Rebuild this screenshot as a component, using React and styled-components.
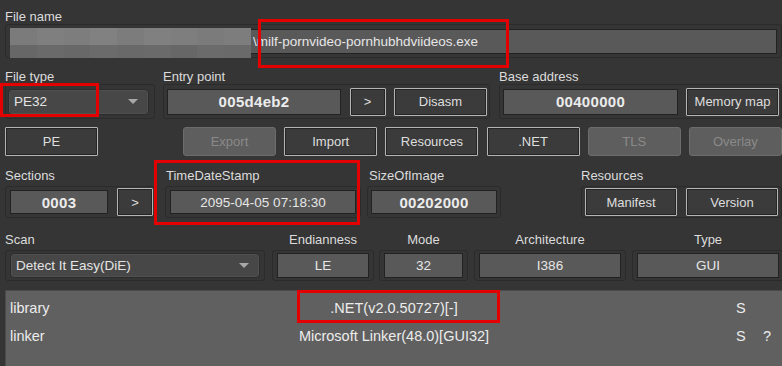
import React from "react";
import styled, { createGlobalStyle, css } from "styled-components";

const GlobalStyle = createGlobalStyle`
  html, body { margin: 0; padding: 0; background: #353535; }
  body { font-family: "Liberation Sans", Arial, sans-serif; }
  * { box-sizing: border-box; }
`;

const Page = styled.div`
  position: relative;
  width: 782px;
  height: 366px;
  overflow: hidden;
  background: #353535;
  padding-top: 9px;
  display: flex;
  flex-direction: column;
  color: #dcdcdc;
`;

const Row = styled.div`
  display: flex;
  align-items: flex-start;
  margin-top: ${(p) => p.$mt || 0}px;
`;

const Group = styled.div`
  display: flex;
  flex-direction: column;
  flex: none;
  width: ${(p) => p.$w}px;
  margin-left: ${(p) => p.$ml}px;
`;

const Label = styled.div`
  font-size: 13px;
  line-height: 15px;
  color: #dcdcdc;
  white-space: nowrap;
  padding-left: ${(p) => p.$pl || 0}px;
  text-align: ${(p) => (p.$center ? "center" : "left")};
  margin-bottom: ${(p) => p.$mb || 0}px;
`;

const Frame = styled.div`
  position: relative;
  display: flex;
  align-items: center;
  gap: ${(p) => p.$gap || 0}px;
  height: ${(p) => p.$h}px;
  padding: 0 ${(p) => p.$pad}px;
  border: 1px solid #2b2b2b;
  border-radius: 3px;
`;

const Field = styled.div`
  flex: none;
  width: ${(p) => (p.$w ? `${p.$w}px` : "auto")};
  ${(p) => !p.$w && "flex: 1;"}
  height: ${(p) => p.$h}px;
  background: #595959;
  border: 1px solid #222;
  display: flex;
  align-items: center;
  justify-content: ${(p) => (p.$left ? "flex-start" : "center")};
  padding-left: ${(p) => p.$pl || 0}px;
  white-space: nowrap;
  overflow: hidden;
  color: #e6e6e6;
  ${(p) =>
    p.$bold
      ? css`
          font-weight: bold;
          font-size: 15px;
          letter-spacing: 0.3px;
          color: #ececec;
        `
      : css`
          font-size: 13.5px;
        `}
`;

const Button = styled.div`
  flex: none;
  width: ${(p) => p.$w}px;
  height: ${(p) => p.$h || 28}px;
  display: flex;
  align-items: center;
  justify-content: center;
  font-size: 13px;
  white-space: nowrap;
  ${(p) =>
    p.$disabled
      ? css`
          background: #5e5e5e;
          border: 1px solid #6c6c6c;
          border-radius: 3px;
          color: #8a8a8a;
        `
      : css`
          background: #3b3b3b;
          border: 1px solid #b4b4b4;
          border-radius: 1px;
          box-shadow: inset 0 0 0 1px #252525;
          color: #dedede;
        `}
`;

const ButtonRow = styled.div`
  display: flex;
  align-items: center;
  gap: 8.2px;
  margin-top: 8px;
  padding-left: 5px;
`;

const Spacer = styled.div`
  flex: none;
  width: ${(p) => p.$w}px;
`;

const Combo = styled.div`
  flex: none;
  width: ${(p) => p.$w}px;
  height: ${(p) => p.$h}px;
  background: #474747;
  border: 1px solid #2c2c2c;
  box-shadow: inset 0 0 0 1px #505050;
  border-radius: 4px;
  display: flex;
  align-items: center;
  justify-content: space-between;
  padding: 0 10px 0 5px;
  font-size: 13.5px;
  color: #e4e4e4;
  white-space: nowrap;
`;

const Arrow = styled.span`
  width: 0;
  height: 0;
  border-left: 5px solid transparent;
  border-right: 5px solid transparent;
  border-top: 5px solid #a8a8a8;
`;

const Mosaic = styled.div`
  position: absolute;
  left: 4px;
  top: 3px;
  width: 241px;
  height: 30px;
  display: grid;
  grid-template-rows: 17px 13px;
  grid-template-columns: repeat(9, 1fr);
`;

const Tile = styled.div`
  background: ${(p) => p.$c};
`;

const Results = styled.div`
  margin: 9px 0 0 5px;
  flex: 1;
  background: #606060;
  border-top: 1px solid #4a4a4a;
  border-left: 1px solid #4a4a4a;
  padding: 3px 0 0 4px;
  display: grid;
  grid-template-columns: 187px 394px 145px 27px 1fr;
  grid-auto-rows: 28px;
  align-content: start;
  font-size: 14.5px;
  color: #ececec;
`;

const Cell = styled.div`
  line-height: 28px;
  white-space: nowrap;
  text-align: ${(p) => (p.$center ? "center" : "left")};
`;

const RedBox = styled.div`
  position: absolute;
  left: ${(p) => p.$x}px;
  top: ${(p) => p.$y}px;
  width: ${(p) => p.$w}px;
  height: ${(p) => p.$h}px;
  border: 3px solid #e50000;
  pointer-events: none;
`;

const topTiles = ["#7b7b7b", "#7f7f7f", "#7d7d7d", "#818181", "#7c7c7c", "#808080", "#7e7e7e", "#7b7b7b", "#7d7d7d"];
const botTiles = ["#676767", "#6a6a6a", "#686868", "#6b6b6b", "#696969", "#6a6a6a", "#676767", "#6b6b6b", "#6a6a6a"];

export default function App() {
  return (
    <>
      <GlobalStyle />
      <Page>
        <Row>
          <Group $ml={5} $w={777}>
            <Label>File name</Label>
            <Frame $h={34} $pad={4}>
              <Field $h={25} $left $pl={242}>
                \milf-pornvideo-pornhubhdviideos.exe
              </Field>
              <Mosaic>
                {topTiles.map((c, i) => (
                  <Tile key={"t" + i} $c={c} />
                ))}
                {botTiles.map((c, i) => (
                  <Tile key={"b" + i} $c={c} />
                ))}
              </Mosaic>
            </Frame>
          </Group>
        </Row>

        <Row $mt={11}>
          <Group $ml={5} $w={150}>
            <Label>File type</Label>
            <Frame $h={35} $pad={2}>
              <Combo $w={141} $h={26}>
                PE32
                <Arrow />
              </Combo>
            </Frame>
          </Group>
          <Group $ml={8} $w={327}>
            <Label>Entry point</Label>
            <Frame $h={35} $pad={3} $gap={8.5}>
              <Field $w={174} $h={26} $bold>
                005d4eb2
              </Field>
              <Button $w={36}>&gt;</Button>
              <Button $w={93}>Disasm</Button>
            </Frame>
          </Group>
          <Group $ml={9} $w={283}>
            <Label>Base address</Label>
            <Frame $h={35} $pad={3} $gap={8}>
              <Field $w={175} $h={26} $bold>
                00400000
              </Field>
              <Button $w={93}>Memory map</Button>
            </Frame>
          </Group>
        </Row>

        <ButtonRow>
          <Button $w={93} $h={29}>PE</Button>
          <Spacer $w={68.6} />
          <Button $w={93} $h={29} $disabled>Export</Button>
          <Button $w={93} $h={29}>Import</Button>
          <Button $w={93} $h={29}>Resources</Button>
          <Button $w={93} $h={29}>.NET</Button>
          <Button $w={93} $h={29} $disabled>TLS</Button>
          <Button $w={93} $h={29} $disabled>Overlay</Button>
        </ButtonRow>

        <Row $mt={12}>
          <Group $ml={5} $w={152}>
            <Label $mb={3}>Sections</Label>
            <Frame $h={32} $pad={4} $gap={9}>
              <Field $w={98} $h={24} $bold>
                0003
              </Field>
              <Button $w={36}>&gt;</Button>
            </Frame>
          </Group>
          <Group $ml={8} $w={196}>
            <Label $mb={3} $pl={1}>TimeDateStamp</Label>
            <Frame $h={32} $pad={4}>
              <Field $w={186} $h={24}>
                2095-04-05 07:18:30
              </Field>
            </Frame>
          </Group>
          <Group $ml={6} $w={134}>
            <Label $mb={3} $pl={2}>SizeOfImage</Label>
            <Frame $h={32} $pad={3}>
              <Field $w={126} $h={24} $bold>
                00202000
              </Field>
            </Frame>
          </Group>
          <Group $ml={80} $w={201}>
            <Label $mb={3}>Resources</Label>
            <Frame $h={32} $pad={3} $gap={9}>
              <Button $w={92}>Manifest</Button>
              <Button $w={92}>Version</Button>
            </Frame>
          </Group>
        </Row>

        <Row $mt={14}>
          <Group $ml={5} $w={260}>
            <Label $mb={3}>Scan</Label>
            <Frame $h={31} $pad={4}>
              <Combo $w={250} $h={25}>
                Detect It Easy(DiE)
                <Arrow />
              </Combo>
            </Frame>
          </Group>
          <Group $ml={7} $w={102}>
            <Label $mb={3} $center>Endianness</Label>
            <Frame $h={31} $pad={4}>
              <Field $w={92} $h={25}>LE</Field>
            </Frame>
          </Group>
          <Group $ml={5} $w={89}>
            <Label $mb={3} $center>Mode</Label>
            <Frame $h={31} $pad={4}>
              <Field $w={79} $h={25}>32</Field>
            </Frame>
          </Group>
          <Group $ml={6} $w={152}>
            <Label $mb={3} $center>Architecture</Label>
            <Frame $h={31} $pad={4}>
              <Field $w={142} $h={25}>I386</Field>
            </Frame>
          </Group>
          <Group $ml={6} $w={152}>
            <Label $mb={3} $center>Type</Label>
            <Frame $h={31} $pad={4}>
              <Field $w={142} $h={25}>GUI</Field>
            </Frame>
          </Group>
        </Row>

        <Results>
          <Cell>library</Cell>
          <Cell $center>.NET(v2.0.50727)[-]</Cell>
          <Cell />
          <Cell>S</Cell>
          <Cell />
          <Cell>linker</Cell>
          <Cell $center>Microsoft Linker(48.0)[GUI32]</Cell>
          <Cell />
          <Cell>S</Cell>
          <Cell>?</Cell>
        </Results>

        <RedBox $x={258} $y={19} $w={251} $h={49} />
        <RedBox $x={0} $y={83} $w={99} $h={34} />
        <RedBox $x={154} $y={160} $w={206} $h={65} />
        <RedBox $x={297} $y={290} $w={203} $h={33} />
      </Page>
    </>
  );
}
